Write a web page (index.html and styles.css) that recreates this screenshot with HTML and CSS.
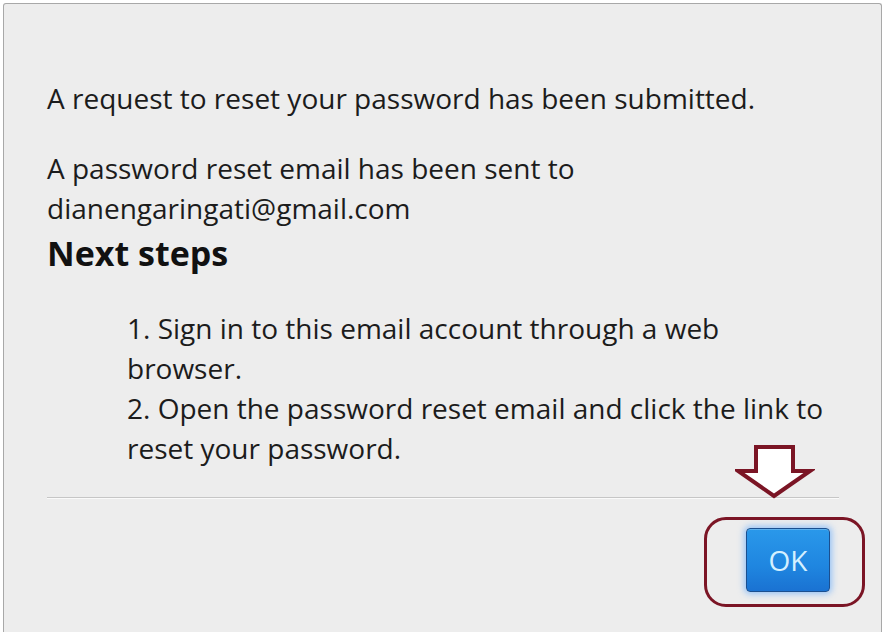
FILE: index.html
```html
<!DOCTYPE html>
<html>
<head>
<meta charset="utf-8">
<link rel="stylesheet" href="styles.css">
</head>
<body>
<div class="frame">
  <div class="content">
    <p class="line first">A request to reset your password has been submitted.</p>
    <p class="line second">A password reset email has been sent to<br>dianengaringati@gmail.com</p>
    <h2 class="heading">Next steps</h2>
    <div class="steps">
      <div>1. Sign in to this email account through a web<br>browser.</div>
      <div>2. Open the password reset email and click the link to<br>reset your password.</div>
    </div>
    <div class="divider"></div>
    <div class="actions">
      <svg class="arrow" width="80" height="56" viewBox="0 0 80 56">
        <path d="M21 3 H58 V27 H75 L39 52 L3 27 H21 Z" fill="#ffffff" stroke="#7b1525" stroke-width="4" stroke-linejoin="miter"/>
      </svg>
      <div class="highlight"></div>
      <button class="ok">OK</button>
    </div>
  </div>
</div>
</body>
</html>
```
FILE: styles.css
```css
html, body {
  margin: 0;
  padding: 0;
  background: #ffffff;
  height: 100%;
  overflow: hidden;
}
.frame {
  margin: 3px 2px 0 3px;
  height: calc(100% - 3px);
  box-sizing: border-box;
  border: 1px solid #a8a8a8;
  border-bottom: none;
  border-radius: 3px 3px 0 0;
  background: #ededed;
  padding: 74px 42px 0 43px;
}
.content {
  font-family: "Open Sans", "Liberation Sans", sans-serif;
  font-size: 28px;
  line-height: 40px;
  color: #1c1c1c;
}
.line {
  margin: 0;
}
.second {
  margin-top: 30px;
}
.heading {
  margin: 0;
  font-size: 34px;
  line-height: 50px;
  font-weight: 700;
  color: #111;
}
.steps {
  margin: 30px 0 0 80px;
}
.divider {
  margin-top: 29px;
  height: 1px;
  background: #c6c6c6;
  box-shadow: 0 1px 0 #fafafa;
  width: 792px;
}
.actions {
  position: relative;
  display: flex;
  justify-content: flex-end;
  padding: 30px 8px 0 0;
  width: 783px;
}
.ok {
  width: 84px;
  height: 64px;
  border: 1px solid #1b4f8f;
  border-radius: 4px;
  background: linear-gradient(#2a98ea, #1f86e0 60%, #1a72d2);
  color: #d4f0ff;
  font-family: "Open Sans", "Liberation Sans", sans-serif;
  font-size: 28px;
  box-shadow: 0 0 6px 2px rgba(80, 160, 255, 0.55), inset 0 1px 0 rgba(255,255,255,0.25);
  padding: 0;
}
.arrow {
  position: absolute;
  right: 23px;
  top: -54px;
}
.highlight {
  position: absolute;
  right: -27px;
  top: 19px;
  width: 155px;
  height: 84px;
  border: 3px solid #7b1525;
  border-radius: 22px;
}
```
